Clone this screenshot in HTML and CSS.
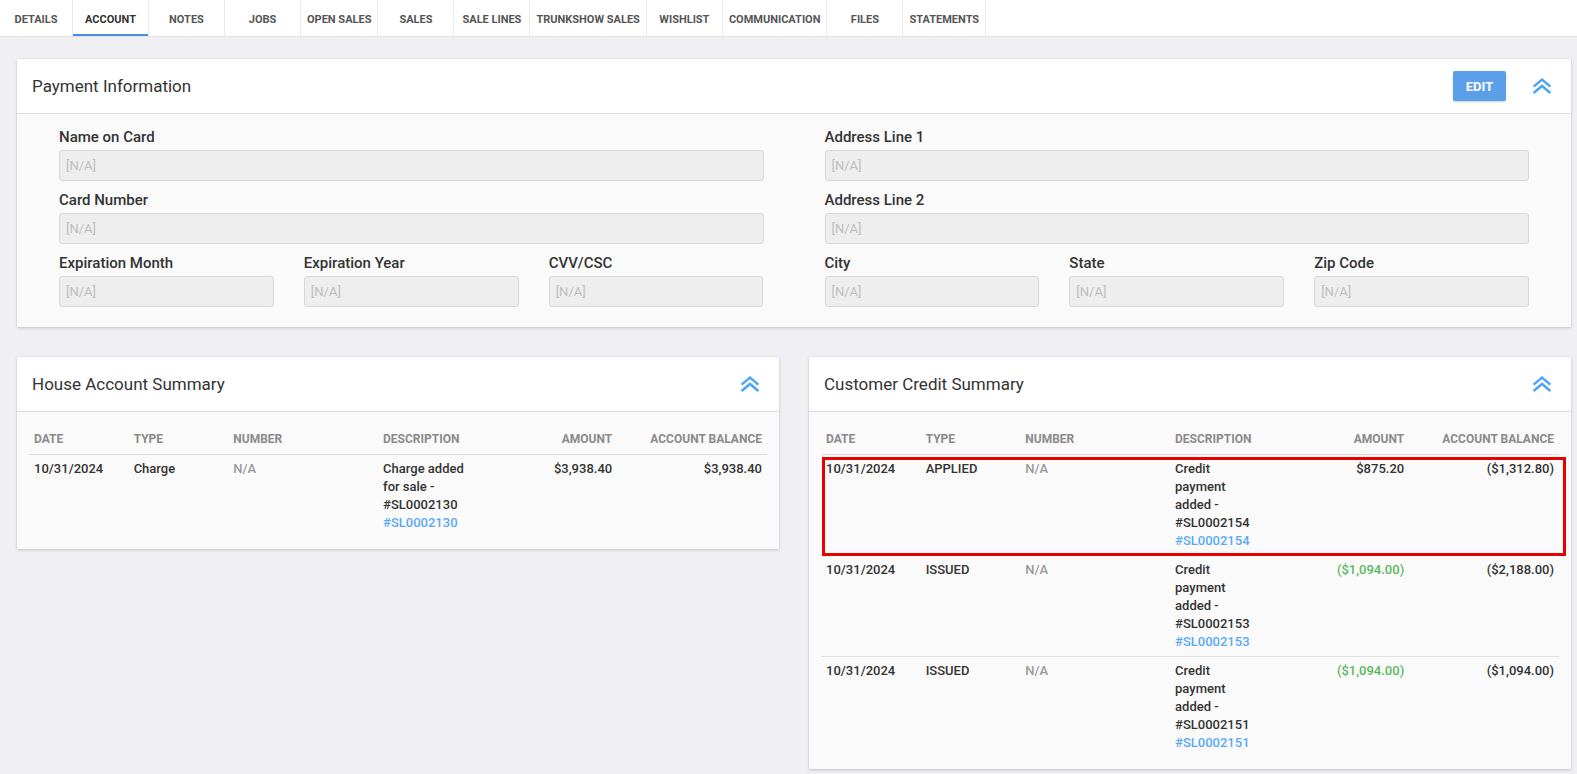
FILE: index.html
```html
<!DOCTYPE html>
<html lang="en">
<head>
<meta charset="utf-8">
<title>Account</title>
<link rel="stylesheet" href="styles.css">
</head>
<body>
<nav class="tabs">
  <div class="tab first">Details</div>
  <div class="tab active">Account</div>
  <div class="tab">Notes</div>
  <div class="tab">Jobs</div>
  <div class="tab">Open Sales</div>
  <div class="tab">Sales</div>
  <div class="tab">Sale Lines</div>
  <div class="tab">Trunkshow Sales</div>
  <div class="tab">Wishlist</div>
  <div class="tab">Communication</div>
  <div class="tab">Files</div>
  <div class="tab">Statements</div>
</nav>

<main class="page">
  <section class="card">
    <header class="card-head">
      <h2 class="card-title">Payment Information</h2>
      <button class="btn-edit">EDIT</button>
      <svg class="collapse" viewBox="0 0 20 16"><polyline points="1.6,8.6 10,1.6 18.4,8.6"/><polyline points="1.6,15 10,8 18.4,15"/></svg>
    </header>
    <div class="form">
      <div class="col">
        <div class="field"><label>Name on Card</label><div class="input">[N/A]</div></div>
        <div class="field"><label>Card Number</label><div class="input">[N/A]</div></div>
        <div class="triple">
          <div class="field"><label>Expiration Month</label><div class="input">[N/A]</div></div>
          <div class="field"><label>Expiration Year</label><div class="input">[N/A]</div></div>
          <div class="field"><label>CVV/CSC</label><div class="input">[N/A]</div></div>
        </div>
      </div>
      <div class="col">
        <div class="field"><label>Address Line 1</label><div class="input">[N/A]</div></div>
        <div class="field"><label>Address Line 2</label><div class="input">[N/A]</div></div>
        <div class="triple">
          <div class="field"><label>City</label><div class="input">[N/A]</div></div>
          <div class="field"><label>State</label><div class="input">[N/A]</div></div>
          <div class="field"><label>Zip Code</label><div class="input">[N/A]</div></div>
        </div>
      </div>
    </div>
  </section>

  <div class="row2">
    <section class="card">
      <header class="card-head">
        <h2 class="card-title">House Account Summary</h2>
        <svg class="collapse" viewBox="0 0 20 16"><polyline points="1.6,8.6 10,1.6 18.4,8.6"/><polyline points="1.6,15 10,8 18.4,15"/></svg>
      </header>
      <div class="tbl">
        <div class="tr thead">
          <div class="cell">Date</div><div class="cell">Type</div><div class="cell">Number</div><div class="cell">Description</div><div class="cell num">Amount</div><div class="cell num">Account Balance</div>
        </div>
        <div class="tbody">
          <div class="tr">
            <div class="cell">10/31/2024</div><div class="cell">Charge</div><div class="cell na">N/A</div>
            <div class="cell">Charge added for sale - #SL0002130 <span class="link">#SL0002130</span></div>
            <div class="cell num">$3,938.40</div><div class="cell num">$3,938.40</div>
          </div>
        </div>
      </div>
    </section>

    <section class="card">
      <header class="card-head">
        <h2 class="card-title">Customer Credit Summary</h2>
        <svg class="collapse" viewBox="0 0 20 16"><polyline points="1.6,8.6 10,1.6 18.4,8.6"/><polyline points="1.6,15 10,8 18.4,15"/></svg>
      </header>
      <div class="tbl">
        <div class="tr thead">
          <div class="cell">Date</div><div class="cell">Type</div><div class="cell">Number</div><div class="cell">Description</div><div class="cell num">Amount</div><div class="cell num">Account Balance</div>
        </div>
        <div class="tbody">
          <div class="tr flag">
            <div class="cell">10/31/2024</div><div class="cell">APPLIED</div><div class="cell na">N/A</div>
            <div class="cell">Credit payment added - #SL0002154 <span class="link">#SL0002154</span></div>
            <div class="cell num">$875.20</div><div class="cell num">($1,312.80)</div>
          </div>
          <div class="tr">
            <div class="cell">10/31/2024</div><div class="cell">ISSUED</div><div class="cell na">N/A</div>
            <div class="cell">Credit payment added - #SL0002153 <span class="link">#SL0002153</span></div>
            <div class="cell num green">($1,094.00)</div><div class="cell num">($2,188.00)</div>
          </div>
          <div class="tr">
            <div class="cell">10/31/2024</div><div class="cell">ISSUED</div><div class="cell na">N/A</div>
            <div class="cell">Credit payment added - #SL0002151 <span class="link">#SL0002151</span></div>
            <div class="cell num green">($1,094.00)</div><div class="cell num">($1,094.00)</div>
          </div>
        </div>
      </div>
    </section>
  </div>
</main>
</body>
</html>
```

FILE: styles.css
```css
* { box-sizing: border-box; }

body {
  margin: 0;
  background: #f0f0f4;
  font-family: Roboto, "Noto Sans", "Liberation Sans", sans-serif;
  color: #333;
}

/* tabs */
.tabs {
  display: flex;
  height: 37px;
  background: #fff;
  border-bottom: 1px solid #e2e2e6;
}
.tab {
  display: flex;
  align-items: center;
  justify-content: center;
  min-width: 76px;
  padding: 3px 6px 0;
  border-right: 1px solid #ebebeb;
  font-size: 11px;
  font-weight: 700;
  text-transform: uppercase;
  color: #555;
  white-space: nowrap;
}
.tab.first { min-width: 73px; }
.tab.active {
  color: #333;
  box-shadow: inset 0 -2px 0 #4a90e2;
}

/* page */
.page {
  padding: 22px 6px 30px 17px;
}

.card {
  background: #fafafa;
  box-shadow: 0 1px 3px rgba(0, 0, 0, 0.18), 0 0 1px rgba(0, 0, 0, 0.12);
}
.card-head {
  display: flex;
  align-items: center;
  height: 55px;
  padding: 0 19px 0 15px;
  background: #fff;
  border-bottom: 1px solid #dedede;
}
.card-title {
  flex: 1;
  margin: 0;
  font-size: 17px;
  font-weight: 400;
  color: #333;
}
.btn-edit {
  width: 53px;
  height: 30px;
  margin-right: 26px;
  border: 0;
  border-radius: 2px;
  background: #5b9ee9;
  color: #fff;
  font-family: Roboto, "Noto Sans", sans-serif;
  font-size: 13px;
  font-weight: 700;
  box-shadow: 0 1px 2px rgba(0, 0, 0, 0.2);
}
.collapse {
  width: 20px;
  height: 16px;
  fill: none;
  stroke: #4ea6f3;
  stroke-width: 2.5;
}

/* form */
.form {
  display: grid;
  grid-template-columns: 1fr 1fr;
  column-gap: 61px;
  padding: 14px 42px 10px;
}
.field { margin-bottom: 10px; }
.field label {
  display: block;
  margin-bottom: 4px;
  font-size: 15px;
  line-height: 18px;
  font-weight: 500;
  color: #333;
}
.input {
  display: flex;
  align-items: center;
  height: 31px;
  padding: 0 6px;
  background: #eeeeee;
  border: 1px solid #d8d8d8;
  border-radius: 3px;
  font-size: 13px;
  color: #bdbdbd;
}
.triple {
  display: grid;
  grid-template-columns: repeat(3, 1fr);
  column-gap: 30px;
}

/* summaries */
.row2 {
  display: grid;
  grid-template-columns: 1fr 1fr;
  column-gap: 30px;
  align-items: start;
  margin-top: 30px;
}
.tbl {
  padding: 12px 12px 12px;
}
.tr {
  display: grid;
  grid-template-columns: 13.5% 13.5% 20.3% 13% 1fr 20.3%;
}
.cell {
  padding: 5px 5px;
  font-size: 13px;
  line-height: 18px;
  font-weight: 500;
  color: #333;
}
.thead {
  border-bottom: 1px solid #dcdcdc;
}
.thead .cell {
  padding: 6px 5px;
  font-size: 12px;
  font-weight: 700;
  text-transform: uppercase;
  color: #8a8a8a;
  white-space: nowrap;
}
.tbody .tr + .tr {
  border-top: 1px solid #e0e0e0;
}
.num { text-align: right; }
.na { color: #9a9a9a; }
.link { color: #5aaaf6; }
.green { color: #5cb85c; }

.flag { position: relative; }
.flag::after {
  content: "";
  position: absolute;
  top: 2px;
  left: 1px;
  right: -7px;
  bottom: -1px;
  border: 3px solid #e60000;
  pointer-events: none;
}
```
